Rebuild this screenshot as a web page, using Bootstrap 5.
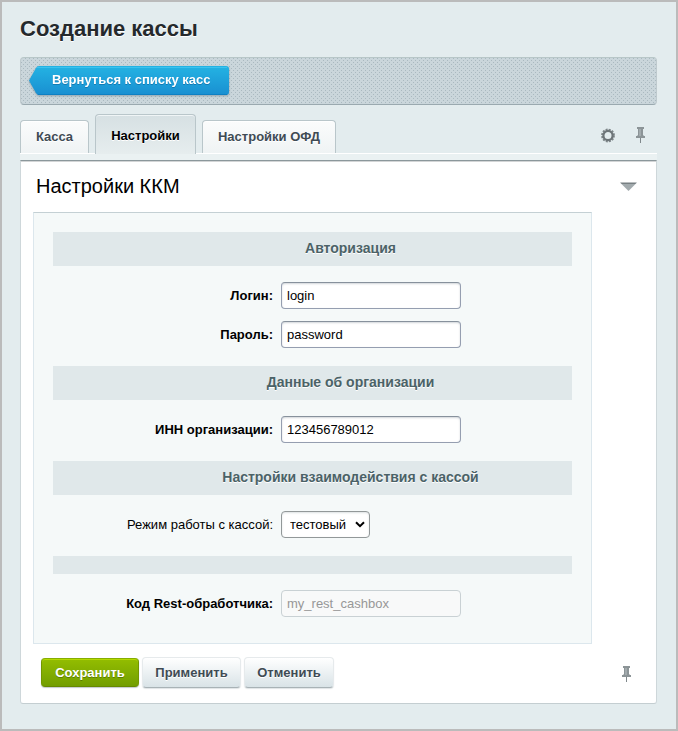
<!DOCTYPE html>
<html lang="ru">
<head>
<meta charset="utf-8">
<meta name="viewport" content="width=device-width, initial-scale=1">
<title>Создание кассы</title>
<link href="https://cdn.jsdelivr.net/npm/bootstrap@5.3.0/dist/css/bootstrap.min.css" rel="stylesheet">
<style>
body{font-family:"Liberation Sans",Arial,sans-serif;font-size:13px;line-height:16px;color:#000;background:#e3ecee}
.admin-frame{height:731px;border:2px solid #bbb;padding:0 19px 0 18px}
.page-title{font-size:22px;line-height:26px;color:#25292c;padding-top:14px;margin-bottom:15px;text-shadow:0 1px #fff}
.context-bar{height:48px;border-radius:4px;border:1px solid #bfcace;border-top-color:#b8c7c8;border-bottom-color:#9aa9af;padding:8px;
background:conic-gradient(from 270deg at 1px 1px,#aab9c0 90deg,transparent 0) 0 0/4px 4px,conic-gradient(from 270deg at 1px 1px,#aab9c0 90deg,transparent 0) 2px 2px/4px 4px,#cad6db}
.back-link{display:block;width:200px;height:30px;position:relative;color:#fff;text-decoration:none;filter:drop-shadow(0 1px 1px rgba(70,100,115,.45))}
.back-link svg{position:absolute;left:0;top:0}
.back-link span{position:relative;display:block;padding:6px 0 0 23px;text-shadow:0 1px rgba(0,60,110,.35)}
.tab-strip{height:49px;border-bottom:1px solid #fff}
.tab-item{width:69px;height:33px;border:1px solid #b9c6ca;border-bottom:0;border-radius:4px 4px 0 0;background:linear-gradient(#fbfcfc,#eff3f4);color:#3f4b54;padding:8px 0 0;text-align:center;font-weight:700;box-shadow:inset 0 1px #fff;text-shadow:0 1px #fff}
.tab-item+.tab-item{width:134px;margin-left:6px}
.tab-strip .tab-item.current{width:101px;height:40px;margin-bottom:-1px;background:linear-gradient(#d6e0e3,#e6edee);color:#000;padding-top:13px;box-shadow:inset 0 1px #f0f5f6}
.tab-tools{padding:0 12px 9px 0}
.tab-gap{height:6px;background:#eaf1f2}
.content-panel{height:544px;background:#fff;border:1px solid #ced7da;border-top:1px solid #8b979b;border-bottom-color:#c4ced1;border-radius:0 0 3px 3px;box-shadow:inset 0 1px #d3d5d6}
.panel-head{padding:13px 19px 0 15px}
.panel-title{font-size:20px;line-height:24px}
.form-area{width:559px;height:432px;margin-left:12px;margin-top:14px;border:1px solid #dce7ed;border-top-color:#c4d0d4;background:#f5f9f9;padding:19px}
.section-head{height:34px;background:#e0e8ea;color:#4b6267;text-align:center;padding:8px 0 0 76px;font-size:14px;font-weight:700;text-shadow:0 1px #fff}
.section-head.blank{height:18px}
.field-row+.section-head{margin-top:18px}
.field-row{height:27px;display:flex;align-items:center;margin-top:16px}
.field-row+.field-row{margin-top:12px}
.field-row label{width:220px;text-align:right;margin-right:8px}
.field-row .form-control{width:180px;height:27px;font-size:13px;line-height:16px;color:#000;padding:0 5px;border:1px solid;border-color:#87919c #959eb0 #959eb0;border-radius:4px;box-shadow:inset 0 1px 2px rgba(120,135,145,.35)}
.field-row .form-control:disabled{background:#f8f9f9;color:#979797;border-color:#c9d1d4;box-shadow:none;opacity:1}
.select-wrap{position:relative}
.field-row .form-select{width:89px;height:27px;font-size:13px;line-height:16px;color:#000;padding:0 0 0 8px;border:1px solid #929899;border-radius:4px;background-image:none;box-shadow:inset 0 1px 2px rgba(120,135,145,.25)}
.select-wrap svg{position:absolute;right:5px;top:10px;pointer-events:none}
.action-row{padding:13px 25px 0 20px}
.action-btn{width:99px;height:31px;border:1px solid #e6eaec;border-bottom-color:#a8b2b6;border-radius:4px;padding:0;margin-left:3px;font-size:13px;line-height:27px;font-weight:700;color:#3f4b54;background:linear-gradient(#fff,#d9e3e7);text-shadow:0 1px #fff;box-shadow:0 1px 1px rgba(80,100,110,.18)}
.action-btn.cancel{width:90px}
.action-btn.save{width:98px;height:29px;line-height:25px;margin-left:0;background:linear-gradient(#93bd00,#729e00);border-color:#86ad00 #729600 #668900;color:#fff;text-shadow:0 1px rgba(60,80,0,.5);box-shadow:inset 0 1px #b5d900,0 1px 1px rgba(80,100,110,.35)}
</style>
<script src="https://cdn.jsdelivr.net/npm/bootstrap@5.3.0/dist/js/bootstrap.bundle.min.js"></script>
</head>
<body>
<svg width="0" height="0" class="position-absolute" aria-hidden="true"><defs>
<symbol id="pin" viewBox="0 0 9 17"><path d="M1 0h7v2H7v6l1 1h1v2H0V9h1l1-1V2H1z" fill="#8c9497"/><path d="M3 2h2v7H3z" fill="#a2aaad"/><path d="M4 11h1v5H4z" fill="#80888b"/></symbol></defs></svg>
<main class="admin-frame">
<h1 class="page-title fw-bold">Создание кассы</h1>
<div class="context-bar">
<a class="back-link fw-bold" href="#"><svg width="200" height="30"><defs><linearGradient id="blueFill" x2="0" y2="1"><stop stop-color="#24b3e3"/><stop offset="1" stop-color="#198fd1"/></linearGradient></defs><path d="M9 0H197Q200 0 200 3V26Q200 29 197 29H10Q8 29 7 27L0 14.5 7 2Q8 0 10 0Z" fill="url(#blueFill)"/><path d="M8 1.5H198" stroke="#46caf4" opacity=".7"/><path d="M9 28.5H198" stroke="#0e80c3"/></svg><span>Вернуться к списку касс</span></a>
</div>
<div class="tab-strip d-flex align-items-end">
<div class="tab-item">Касса</div>
<div class="tab-item current">Настройки</div>
<div class="tab-item">Настройки ОФД</div>
<div class="tab-tools d-flex ms-auto align-items-center">
<svg width="16" height="16" viewBox="0 0 16 16" class="me-3" fill="none"><circle cx="8" cy="7.5" r="6" stroke="#7d8588" stroke-width="1.8" stroke-dasharray="2 1.14"/><circle cx="8" cy="7.5" r="4.6" stroke="#6d7578" stroke-width="2.2"/></svg>
<svg width="9" height="17" class="ms-1"><use href="#pin"/></svg>
</div>
</div>
<div class="tab-gap"></div>
<section class="content-panel">
<div class="panel-head d-flex align-items-center"><h2 class="panel-title m-0 fw-normal">Настройки ККМ</h2>
<svg class="ms-auto" width="17" height="9"><path d="M.5 1h16l-8 8z" fill="#a2aaad"/><path d="M0 .5h17L15 2H2z" fill="#777f82"/></svg></div>
<form class="form-area">
<div class="section-head">Авторизация</div>
<div class="field-row"><label class="fw-bold">Логин:</label><input class="form-control" value="login"></div>
<div class="field-row"><label class="fw-bold">Пароль:</label><input class="form-control" value="password"></div>
<div class="section-head">Данные об организации</div>
<div class="field-row"><label class="fw-bold">ИНН организации:</label><input class="form-control" value="123456789012"></div>
<div class="section-head">Настройки взаимодействия с кассой</div>
<div class="field-row"><label>Режим работы с кассой:</label><div class="select-wrap"><select class="form-select"><option>тестовый</option></select><svg width="10" height="7" viewBox="0 0 10 7"><path d="M1 1.2 5 5.2 9 1.2" fill="none" stroke="#000" stroke-width="2"/></svg></div></div>
<div class="section-head blank"></div>
<div class="field-row"><label class="fw-bold">Код Rest-обработчика:</label><input class="form-control" value="my_rest_cashbox" disabled></div>
</form>
<div class="action-row d-flex align-items-center">
<button class="action-btn save">Сохранить</button>
<button class="action-btn">Применить</button>
<button class="action-btn cancel">Отменить</button>
<svg width="9" height="17" class="ms-auto mt-1"><use href="#pin"/></svg>
</div>
</section>
</main>
</body>
</html>
